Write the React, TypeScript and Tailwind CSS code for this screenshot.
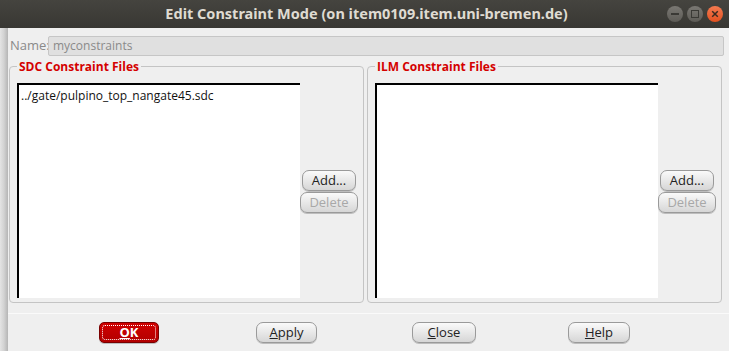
const Btn = ({
  label,
  u,
  disabled,
  className = "",
}: {
  label: string;
  u?: number;
  disabled?: boolean;
  className?: string;
}) => {
  const text =
    u === undefined ? (
      label
    ) : (
      <>
        {label.slice(0, u)}
        <span className="underline">{label[u]}</span>
        {label.slice(u + 1)}
      </>
    );
  return (
    <div
      className={`flex h-[21px] items-center justify-center rounded-[7px] border border-[#9a9a9a] bg-gradient-to-b from-[#fafafa] to-[#d6d6d6] text-[13px] leading-none shadow-[0_1px_0_#bdbdbd] ${
        disabled ? "text-[#a8a8a8]" : "text-[#222]"
      } ${className}`}
    >
      {text}
    </div>
  );
};

const Group = ({ title, items }: { title: string; items: string[] }) => (
  <div className="relative flex w-[355px] shrink-0 rounded-[4px] border border-[#c4c4c4] pb-[4px] pl-[7px] pr-[6px] pt-[16px]">
    <div className="absolute left-[7px] top-[-7px] bg-[#efefef] px-[2px] text-[12px] font-bold leading-[14px] text-[#d40000]">
      {title}
    </div>
    <div className="h-[215px] w-[283px] shrink-0 border-l-2 border-t-2 border-black bg-white pl-[2px] pt-[3px] text-[12px] leading-[15px] text-[#111]">
      {items.map((i) => (
        <div key={i}>{i}</div>
      ))}
    </div>
    <div className="flex flex-1 flex-col items-center gap-[1px] pt-[87px]">
      <Btn label="Add..." className="w-[54px]" />
      <Btn label="Delete" disabled className="w-[58px]" />
    </div>
  </div>
);

export default function App() {
  return (
    <div
      className="flex h-[351px] w-[729px] flex-col overflow-hidden bg-[#efefef]"
      style={{ fontFamily: '"Open Sans", "Noto Sans", sans-serif' }}
    >
      <div className="flex h-[28px] shrink-0 items-center bg-gradient-to-b from-[#45443f] to-[#383733] pl-[66px] pr-[6px]">
        <div
          className="flex-1 text-center text-[14.5px] font-bold text-[#dfdbd2]"
          style={{ fontFamily: '"Noto Sans", sans-serif' }}
        >
          Edit Constraint Mode (on item0109.item.uni-bremen.de)
        </div>
        <div className="flex gap-[4px]">
          <div className="flex h-[16px] w-[16px] items-center justify-center rounded-full bg-gradient-to-b from-[#7a7873] to-[#5d5b56]">
            <div className="h-[2px] w-[8px] bg-[#3a3935]" />
          </div>
          <div className="flex h-[16px] w-[16px] items-center justify-center rounded-full bg-gradient-to-b from-[#7a7873] to-[#5d5b56]">
            <div className="h-[8px] w-[8px] border-[1.5px] border-[#3a3935]" />
          </div>
          <div className="flex h-[16px] w-[16px] items-center justify-center rounded-full bg-gradient-to-b from-[#f47a4f] to-[#e2501e]">
            <svg width="8" height="8" viewBox="0 0 8 8">
              <path d="M1.2 1.2 L6.8 6.8 M6.8 1.2 L1.2 6.8" stroke="#3a2a20" strokeWidth="1.5" />
            </svg>
          </div>
        </div>
      </div>
      <div className="flex flex-1">
        <div className="flex w-[8px] shrink-0 bg-gradient-to-r from-[#e4e4e4] via-[#d2d2d2] to-[#b5b5b5]" />
        <div className="flex flex-1 flex-col">
          <div className="flex items-center pl-[2px] pr-[5px] pt-[8px]">
            <span className="w-[38px] text-[13px] text-[#8a8a8a]">Name:</span>
            <div className="flex h-[20px] flex-1 items-center rounded-[2px] border border-[#c6c6c6] bg-[#e0e0e0] pl-[4px] text-[12px] text-[#8a8a8a]">
              myconstraints
            </div>
          </div>
          <div className="flex gap-[3px] pl-[1px] pt-[10px]">
            <Group title="SDC Constraint Files" items={["../gate/pulpino_top_nangate45.sdc"]} />
            <Group title="ILM Constraint Files" items={[]} />
          </div>
          <div className="mt-[10px] border-t border-[#fafafa]" />
          <div className="flex pl-[91px] pt-[8px]">
            <div className="flex h-[21px] w-[60px] items-center justify-center rounded-[5px] border border-[#7a0000] bg-gradient-to-b from-[#d00000] to-[#b20000] p-[2px] shadow-[0_1px_0_#bdbdbd]">
              <div className="flex h-full w-full items-center justify-center rounded-[3px] border border-dotted border-white text-[13px] font-bold leading-none text-white">
                <span className="underline">O</span>K
              </div>
            </div>
            <Btn label="Apply" u={0} className="ml-[97px] w-[61px]" />
            <Btn label="Close" u={0} className="ml-[95px] w-[64px]" />
            <Btn label="Help" u={0} className="ml-[92px] w-[62px]" />
          </div>
        </div>
      </div>
    </div>
  );
}
